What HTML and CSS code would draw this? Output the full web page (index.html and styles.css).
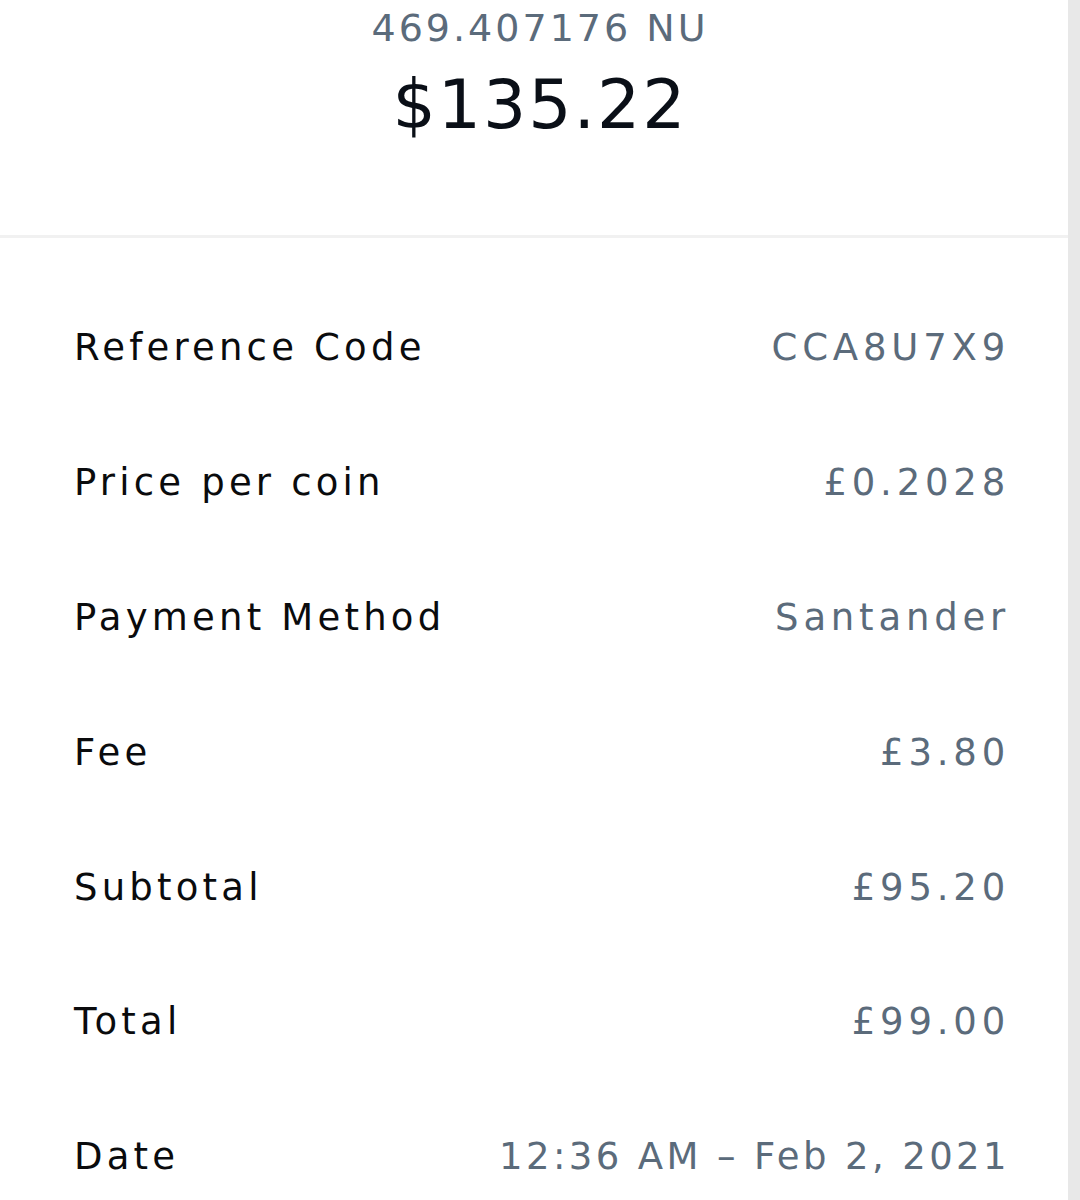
FILE: index.html
```html
<!DOCTYPE html>
<html lang="en">
<head>
    <meta charset="UTF-8">
    <meta name="viewport" content="width=device-width, initial-scale=1.0">
    <title>Transaction Details</title>
    <link rel="stylesheet" href="styles.css">
</head>
<body>

    <!-- Amount summary -->
    <header class="summary">
        <div class="coin-amount">469.407176 NU</div>
        <div class="fiat-amount">$135.22</div>
    </header>

    <!-- Detail rows -->
    <ul class="details">
        <li class="detail-row"><span class="label">Reference Code</span><span class="value">CCA8U7X9</span></li>
        <li class="detail-row"><span class="label">Price per coin</span><span class="value">£0.2028</span></li>
        <li class="detail-row"><span class="label">Payment Method</span><span class="value">Santander</span></li>
        <li class="detail-row"><span class="label">Fee</span><span class="value">£3.80</span></li>
        <li class="detail-row"><span class="label">Subtotal</span><span class="value">£95.20</span></li>
        <li class="detail-row"><span class="label">Total</span><span class="value">£99.00</span></li>
        <li class="detail-row"><span class="label">Date</span><span class="value date">12:36 AM – Feb 2, 2021</span></li>
    </ul>

    <div class="scroll-track"></div>

</body>
</html>
```

FILE: styles.css
```css
body {
    margin: 0;
    font-family: "DejaVu Sans", "Liberation Sans", sans-serif;
    background-color: #ffffff;
    color: #0a0b0d;
    overflow: hidden;
}

.summary {
    text-align: center;
    padding: 5px 0 90px;
    border-bottom: 3px solid #f1f1f1;
}

.coin-amount {
    font-size: 38px;
    line-height: 46px;
    letter-spacing: 3px;
    color: #5b6b7b;
}

.fiat-amount {
    margin-top: 14px;
    font-size: 68px;
    line-height: 80px;
    letter-spacing: 2px;
    color: #0a0f17;
}

.details {
    list-style: none;
    margin: 0;
    padding: 43px 70px 0 74px;
}

.detail-row {
    display: flex;
    justify-content: space-between;
    align-items: center;
    padding: 45.4px 0;
    font-size: 37px;
    line-height: 44px;
}

.label {
    color: #0a0b0d;
    letter-spacing: 4.2px;
}

.value {
    color: #5b6b7b;
    letter-spacing: 4.8px;
}

.value.date {
    letter-spacing: 3.4px;
}

/* Grey strip along the right edge */
.scroll-track {
    position: fixed;
    top: 0;
    right: 0;
    width: 12px;
    height: 100%;
    background: #e8e8e8;
}
```
